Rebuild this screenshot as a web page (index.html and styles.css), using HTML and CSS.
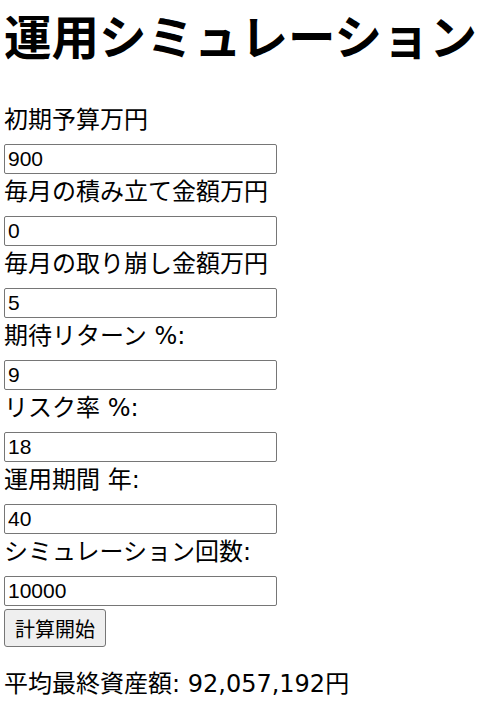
FILE: index.html
```html
<!DOCTYPE html>
<html lang="ja">
<head>
<meta charset="utf-8">
<title>運用シミュレーション</title>
<link rel="stylesheet" href="styles.css">
</head>
<body>
<h1 class="title">運用シミュレーション</h1>
<form class="sim-form">
  <label class="field-label" for="initial">初期予算万円</label>
  <input class="field-input" id="initial" type="text" value="900">
  <label class="field-label" for="monthly">毎月の積み立て金額万円</label>
  <input class="field-input" id="monthly" type="text" value="0">
  <label class="field-label" for="withdraw">毎月の取り崩し金額万円</label>
  <input class="field-input" id="withdraw" type="text" value="5">
  <label class="field-label" for="ret">期待リターン %:</label>
  <input class="field-input" id="ret" type="text" value="9">
  <label class="field-label" for="risk">リスク率 %:</label>
  <input class="field-input" id="risk" type="text" value="18">
  <label class="field-label" for="years">運用期間 年:</label>
  <input class="field-input" id="years" type="text" value="40">
  <label class="field-label" for="runs">シミュレーション回数:</label>
  <input class="field-input" id="runs" type="text" value="10000">
  <button class="start-btn" type="button">計算開始</button>
</form>
<p class="result">平均最終資産額: 92,057,192円</p>
</body>
</html>
```
FILE: styles.css
```css
html, body {
  background: #ffffff;
}
body {
  margin: 0;
  padding: 0 4px;
  font-family: "DejaVu Sans", "Noto Sans CJK JP", sans-serif;
  font-size: 24px;
  color: #000000;
}
.title {
  font-family: "Noto Sans CJK JP", sans-serif;
  font-size: 47.5px;
  line-height: 69px;
  font-weight: 700;
  margin: 0;
  white-space: nowrap;
}
.sim-form {
  display: flex;
  flex-direction: column;
  align-items: flex-start;
  margin-top: 33px;
}
.field-label {
  display: block;
  box-sizing: border-box;
  height: 42px;
  line-height: 36px;
  padding-bottom: 6px;
  white-space: nowrap;
}
.field-input {
  box-sizing: border-box;
  width: 273px;
  height: 30px;
  margin: 0;
  padding: 0 3px;
  border: 1px solid #767676;
  border-radius: 2px;
  font-family: "Liberation Sans", Arial, sans-serif;
  font-size: 21px;
  color: #000000;
  background: #ffffff;
}
.start-btn {
  box-sizing: border-box;
  margin-top: 3px;
  height: 38px;
  padding: 0 10px;
  border: 1px solid #767676;
  border-radius: 3px;
  background: #efefef;
  font-family: "Noto Sans CJK JP", sans-serif;
  font-size: 20px;
  color: #000000;
}
.result {
  margin: 19px 0 0;
  line-height: 36px;
  white-space: nowrap;
}
```
